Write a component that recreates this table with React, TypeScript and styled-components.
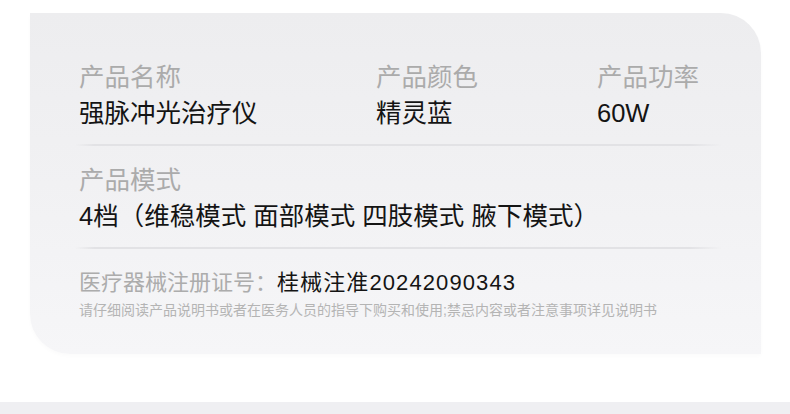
import React from "react";
import styled, { createGlobalStyle } from "styled-components";

const GlobalStyle = createGlobalStyle`
  html, body {
    margin: 0;
    padding: 0;
    background: #ffffff;
  }
  body {
    font-family: "Liberation Sans", "Noto Sans CJK SC", sans-serif;
  }
`;

interface Spec {
  label: string;
  value: string;
}

const topSpecs: Spec[] = [
  { label: "产品名称", value: "强脉冲光治疗仪" },
  { label: "产品颜色", value: "精灵蓝" },
  { label: "产品功率", value: "60W" },
];

const App = () => {
  return (
    <Page>
      <GlobalStyle />
      <Card>
        <SpecRow>
          {topSpecs.map((spec) => (
            <SpecItem key={spec.label}>
              <Label>{spec.label}</Label>
              <Value>{spec.value}</Value>
            </SpecItem>
          ))}
        </SpecRow>
        <Divider />
        <SpecItem>
          <Label>产品模式</Label>
          <Value>4档（维稳模式 面部模式 四肢模式 腋下模式）</Value>
        </SpecItem>
        <Divider />
        <Registration>
          <RegLabel>医疗器械注册证号：</RegLabel>
          <RegNumber>桂械注准20242090343</RegNumber>
        </Registration>
        <Notice>请仔细阅读产品说明书或者在医务人员的指导下购买和使用;禁忌内容或者注意事项详见说明书</Notice>
      </Card>
      <BottomBand />
    </Page>
  );
};

const Page = styled.div`
  width: 790px;
  height: 414px;
  display: flex;
  flex-direction: column;
  padding-top: 13px;
  box-sizing: border-box;
  overflow: hidden;
`;

const Card = styled.div`
  margin: 0 29px 0 30px;
  height: 341px;
  box-sizing: border-box;
  padding: 46px 0 0 49px;
  background: linear-gradient(180deg, #ededef 0%, #f1f1f3 50%, #f6f6f8 100%);
  border-radius: 0 40px 0 40px;
  box-shadow: 0 2px 4px rgba(0, 0, 0, 0.02);
  display: flex;
  flex-direction: column;
`;

const SpecRow = styled.div`
  display: grid;
  grid-template-columns: 297px 221px 1fr;
`;

const SpecItem = styled.div`
  display: flex;
  flex-direction: column;
`;

const Label = styled.div`
  font-size: 25.5px;
  line-height: 36px;
  color: #ababab;
  white-space: nowrap;
`;

const Value = styled.div`
  font-size: 25.5px;
  line-height: 36px;
  color: #141414;
  white-space: nowrap;
`;

const Divider = styled.div`
  height: 2px;
  margin: 13px 39px 16px -4px;
  background: linear-gradient(
    90deg,
    rgba(225, 225, 228, 0) 0%,
    #e2e2e5 3%,
    #e2e2e5 95%,
    rgba(225, 225, 228, 0) 100%
  );
`;

const Registration = styled.div`
  display: flex;
  align-items: center;
  margin-top: 3px;
  font-size: 22px;
  line-height: 30px;
  white-space: nowrap;
`;

const RegLabel = styled.span`
  color: #acacac;
`;

const RegNumber = styled.span`
  color: #141414;
  letter-spacing: 1.1px;
`;

const Notice = styled.div`
  margin-top: 2px;
  font-size: 14px;
  line-height: 20px;
  color: #b4b4b4;
  white-space: nowrap;
`;

const BottomBand = styled.div`
  margin-top: auto;
  height: 12px;
  background: #efeff2;
`;

export default App;
